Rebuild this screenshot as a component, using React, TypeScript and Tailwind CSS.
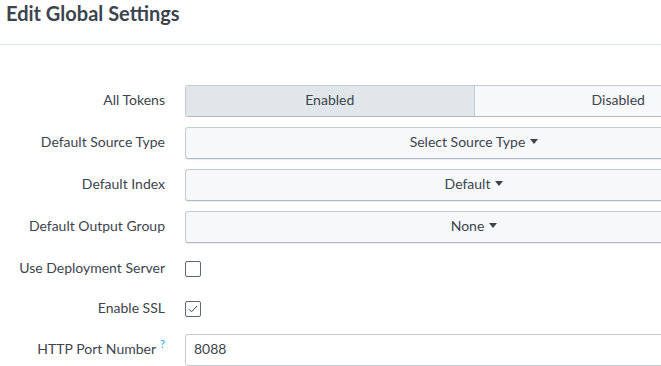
import { useState } from "react";

const font = { fontFamily: "Lato, 'Open Sans', sans-serif" };

function Label({ children }: { children: React.ReactNode }) {
  return (
    <div className="w-[165px] shrink-0 pb-[4px] text-right text-[14px] text-[#3c444d]">
      {children}
    </div>
  );
}

function Caret() {
  return (
    <svg width="8" height="5" viewBox="0 0 8 5" className="ml-[5px] inline-block">
      <path d="M0 0h8L4 5z" fill="#3c444d" />
    </svg>
  );
}

function SelectButton({ text }: { text: string }) {
  return (
    <button className="flex h-[32px] w-[578px] shrink-0 items-center justify-center rounded-[3px] border border-[#c3cbd4] border-b-[#b0b9c3] bg-[#f7f8fa] pb-[4px] text-[14px] text-[#3c444d] shadow-[0_1px_1px_rgba(0,0,0,0.08)]">
      {text}
      <Caret />
    </button>
  );
}

function Checkbox({ checked, onChange }: { checked: boolean; onChange: () => void }) {
  return (
    <button
      onClick={onChange}
      className="-mt-[1px] flex h-[16px] w-[16px] items-center justify-center rounded-[2px] border border-[#5c6773] bg-white"
    >
      {checked && (
        <svg width="10" height="8" viewBox="0 0 10 8">
          <path d="M1 4.2l2.6 2.6L9 1" fill="none" stroke="#3c444d" strokeWidth="1" />
        </svg>
      )}
    </button>
  );
}

export default function App() {
  const [tokens, setTokens] = useState<"enabled" | "disabled">("enabled");
  const [deploy, setDeploy] = useState(false);
  const [ssl, setSsl] = useState(true);
  const [port, setPort] = useState("8088");

  return (
    <div className="h-[366px] w-[661px] overflow-hidden bg-white" style={font}>
      <div className="h-[45px] border-b border-[#e1e6eb] pl-[6px]">
        <h2 className="text-[20px] font-bold leading-[26px] text-[#3c444d]">
          Edit Global Settings
        </h2>
      </div>

      <div className="pt-[40px]">
        <div className="mb-[10px] flex items-center gap-[20px]">
          <Label>All Tokens</Label>
          <div className="flex h-[32px] w-[578px] shrink-0 overflow-hidden rounded-[3px] border border-[#c3cbd4] border-b-[#b0b9c3] text-[14px] text-[#3c444d]">
            <button
              onClick={() => setTokens("enabled")}
              className={`flex-1 border-r border-[#c3cbd4] pb-[4px] ${
                tokens === "enabled" ? "bg-[#e1e6eb]" : "bg-[#f7f8fa]"
              }`}
            >
              Enabled
            </button>
            <button
              onClick={() => setTokens("disabled")}
              className={`flex-1 pb-[4px] ${tokens === "disabled" ? "bg-[#e1e6eb]" : "bg-[#f7f8fa]"}`}
            >
              Disabled
            </button>
          </div>
        </div>

        <div className="mb-[10px] flex items-center gap-[20px]">
          <Label>Default Source Type</Label>
          <SelectButton text="Select Source Type" />
        </div>

        <div className="mb-[10px] flex items-center gap-[20px]">
          <Label>Default Index</Label>
          <SelectButton text="Default" />
        </div>

        <div className="mb-[10px] flex items-center gap-[20px]">
          <Label>Default Output Group</Label>
          <SelectButton text="None" />
        </div>

        <div className="mb-[8px] flex h-[32px] items-center gap-[20px]">
          <Label>Use Deployment Server</Label>
          <Checkbox checked={deploy} onChange={() => setDeploy(!deploy)} />
        </div>

        <div className="mb-[9px] flex h-[32px] items-center gap-[20px]">
          <Label>Enable SSL</Label>
          <Checkbox checked={ssl} onChange={() => setSsl(!ssl)} />
        </div>

        <div className="flex items-center gap-[20px]">
          <Label>
            HTTP Port Number
            <sup className="ml-[4px] text-[11px] text-[#1a9fe6]">?</sup>
          </Label>
          <input
            value={port}
            onChange={(e) => setPort(e.target.value)}
            className="h-[32px] w-[578px] shrink-0 rounded-[3px] border border-[#c3cbd4] bg-white px-[8px] pb-[4px] text-[14px] text-[#3c444d] outline-none"
          />
        </div>
      </div>
    </div>
  );
}
